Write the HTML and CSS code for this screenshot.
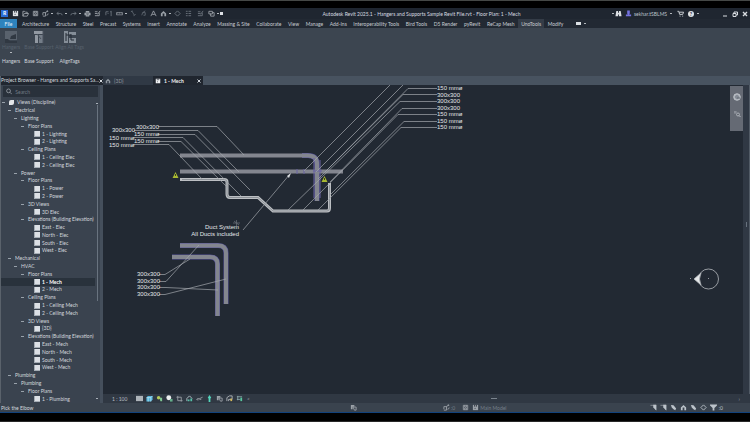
FILE: index.html
```html
<!DOCTYPE html>
<html lang="en">
<head>
<meta charset="utf-8">
<title>Autodesk Revit 2025.1</title>
<link rel="stylesheet" href="styles.css">
</head>
<body>
<svg class="defs" aria-hidden="true">
  <symbol id="home" viewBox="0 0 8 8"><path fill="currentColor" d="M1 1h6v6H1z"/><path stroke="#252c36" d="M3 1v2M5 1v2M3 5h1"/></symbol>
  <symbol id="open" viewBox="0 0 8 8"><path d="M1 7V1.500h2l1 1h2V4M1 7l1.500-3h5L6 7z" fill="none" stroke="currentColor"/></symbol>
  <symbol id="save" viewBox="0 0 8 8"><path d="M1.500 1.500h5v5h-5zM3 1.500v2h2v-2M3 6.500v-2h2v2" fill="none" stroke="currentColor"/></symbol>
  <symbol id="sync" viewBox="0 0 8 8"><path d="M1 6V3h3v4H1M4 3.500q0-2 3-2M7 1.500L5.500.5M7 4q0 2-2 2" fill="none" stroke="currentColor"/></symbol>
  <symbol id="undo" viewBox="0 0 8 8"><path d="M3 2L1 4l2 1.500M1 4h4q2 0 2 2" fill="none" stroke="currentColor"/></symbol>
  <symbol id="redo" viewBox="0 0 8 8"><path d="M5 2l2 2-2 1.500M7 4H3Q1 4 1 6" fill="none" stroke="currentColor"/></symbol>
  <symbol id="print" viewBox="0 0 8 8"><path d="M2 1h4v2h1.500v3H6v1.500H2V6H.5V3H2z" fill="currentColor"/><path d="M2.500 3.500h3M3 5.500h2" stroke="#252c36" stroke-width=".7"/></symbol>
  <symbol id="edit" viewBox="0 0 8 8"><path d="M1 2h3M1 4h3M1 6.500h5V3M4 5l3-4" fill="none" stroke="currentColor"/></symbol>
  <symbol id="section" viewBox="0 0 8 8"><path d="M1 2v4M1 2h3M3 4h1M7 1v6M6 2h1" fill="none" stroke="currentColor"/></symbol>
  <symbol id="measure" viewBox="0 0 8 8"><path d="M.5 3h7v2.500h-7zM2 3v1M4 3v1M6 3v1" fill="none" stroke="currentColor" stroke-width=".8"/></symbol>
  <symbol id="dim" viewBox="0 0 8 8"><path d="M2 1l3 5M1 2l2-1M4 6.500L6.500 5" fill="none" stroke="currentColor" stroke-width=".8"/></symbol>
  <symbol id="tag" viewBox="0 0 8 8"><path d="M2 6l1-3 3-2M3 3h3v3H4" fill="none" stroke="currentColor" stroke-width=".8"/></symbol>
  <symbol id="text" viewBox="0 0 8 8"><path d="M1 7l3-6 3 6M2.500 5h3" fill="none" stroke="currentColor"/></symbol>
  <symbol id="house" viewBox="0 0 8 8"><path d="M1 7V4l3-3 3 3v3H5V4H3v3z" fill="currentColor"/></symbol>
  <symbol id="ring" viewBox="0 0 8 8"><path d="M4 1l3 3-3 3-3-3z" fill="none" stroke="currentColor"/></symbol>
  <symbol id="lines" viewBox="0 0 8 8"><path d="M1 1.500h2M4 1.500h3M1 4h2M4 4h3M1 6.500h2M4 6.500h3" stroke="currentColor"/></symbol>
  <symbol id="windows" viewBox="0 0 8 8"><path d="M1 1.500h4v3H1zM3 4v3h4V3H5" fill="none" stroke="currentColor"/></symbol>
  <symbol id="binoc" viewBox="0 0 8 8"><path d="M1.500 1h2v2h1V1h2l1 6h-3V5h-1v2h-3z" fill="currentColor"/></symbol>
  <symbol id="user" viewBox="0 0 8 8"><path d="M2.500.5h3V4L4.700 5H7v2H1V5h2.300L2.500 4z" fill="#7472df"/></symbol>
  <symbol id="cart" viewBox="0 0 8 8"><path d="M.5 1.500H2L3 5h3.500l1-2.500h-5M3 7h1M6 7h1" fill="none" stroke="currentColor"/></symbol>
  <symbol id="search" viewBox="0 0 8 8"><circle cx="3.200" cy="3.200" r="2.400" fill="none" stroke="currentColor"/><path d="M5 5l2.500 2.500" stroke="currentColor"/></symbol>
  <symbol id="pick" viewBox="0 0 8 8"><path d="M.5 1.500h4M4 1h3v6L5.500 5.500 4 4z" fill="currentColor" stroke="currentColor" stroke-width=".6"/></symbol>
  <symbol id="pin" viewBox="0 0 8 8"><path d="M1 1l3 .5 3 3.500-1 2-2-1-2-2z" fill="currentColor"/></symbol>
  <symbol id="filter" viewBox="0 0 8 8"><path d="M0 .5h8v1.300L5 4.500v3H3v-3L0 1.800z" fill="currentColor"/></symbol>
  <symbol id="cube" viewBox="0 0 8 8"><path d="M2 1h5.500v4.500l-2 2H.5V3z" fill="#54b5dc"/><path d="M.5 3h5v4.500M5.500 3l2-2M2.500 3v4.500" stroke="#d3edf5" stroke-width=".7" fill="none"/></symbol>
  <symbol id="sun" viewBox="0 0 8 8"><circle cx="3" cy="3" r="2" fill="#b6c95a"/><path d="M4 3h3v4H5z" fill="#80c894"/></symbol>
  <symbol id="shadow" viewBox="0 0 8 8"><circle cx="3.200" cy="3.200" r="2.800" fill="#eceef0"/><path d="M4.500 4.500h3v3h-3z" fill="#65b08c"/></symbol>
  <symbol id="crop" viewBox="0 0 8 8"><path d="M2 1v5.500h5.500M.5 2.500h5.500v5" fill="none" stroke="currentColor"/></symbol>
  <symbol id="cropon" viewBox="0 0 8 8"><path d="M1 7V4l3-3 3 3" fill="none" stroke="#b9c9d0"/><path d="M2 5h2v2H2zM5 4h2v3H5z" fill="#55c2aa"/></symbol>
  <symbol id="glass" viewBox="0 0 8 8"><path d="M.5 5.500l2-2 1 1 2-1 2-1M1 5.500h2M4 5h2" fill="none" stroke="currentColor"/></symbol>
  <symbol id="bulb" viewBox="0 0 8 8"><path d="M4 0l2 3-1 1v4H3V4L2 3z" fill="#55d5bd"/></symbol>
  <symbol id="layers" viewBox="0 0 8 8"><path d="M1 1h4v2H3v3H1z" fill="currentColor"/><path d="M3.500 3.500H7V7H5z" fill="none" stroke="currentColor"/></symbol>
  <symbol id="analytic" viewBox="0 0 8 8"><path d="M1 7V3l3-2h3v4H3v2" fill="none" stroke="#b4b8bd"/><path d="M5 4h2v3H5z" fill="#d4b95c"/></symbol>
  <symbol id="reveal" viewBox="0 0 8 8"><path d="M1 2h6M2 1v5M1 5h4" fill="none" stroke="#8ca6a9"/><path d="M5 3h2v4H5z" fill="#58c9a0"/></symbol>
  <symbol id="wheel" viewBox="0 0 8 8"><circle cx="4" cy="4" r="3.300" fill="#a2a7b0" stroke="#cbd0d6" stroke-width=".8"/><circle cx="4" cy="4" r="1.300" fill="none" stroke="#606873" stroke-width=".7"/><path d="M4 5h3" stroke="#606873"/></symbol>
  <symbol id="zoomr" viewBox="0 0 8 8"><path d="M1 2h3M2 1v3" stroke="#a7abb2" stroke-width=".7"/><circle cx="5" cy="4.500" r="1.500" fill="none" stroke="#b8bcc3" stroke-width=".8"/><path d="M6 5.500L7.500 7" stroke="#b8bcc3"/></symbol>
</svg>

<div class="app">
  <header class="titlebar">
    <div class="quick">
      <button class="logo" aria-label="Revit">R</button>
      <button class="tool bright" aria-label="Home"><svg><use href="#home"/></svg></button>
      <button class="tool" aria-label="Open"><svg><use href="#open"/></svg></button>
      <button class="tool" aria-label="Save"><svg><use href="#save"/></svg></button>
      <button class="tool drop" aria-label="Synchronize"><svg><use href="#sync"/></svg></button>
      <button class="tool drop dim" aria-label="Undo"><svg><use href="#undo"/></svg></button>
      <button class="tool drop dim" aria-label="Redo"><svg><use href="#redo"/></svg></button>
      <button class="tool" aria-label="Print"><svg><use href="#print"/></svg></button>
      <button class="tool" aria-label="Edit"><svg><use href="#edit"/></svg></button>
      <button class="tool dim wide" aria-label="Section"><svg><use href="#section"/></svg></button>
      <button class="tool drop" aria-label="Measure"><svg><use href="#measure"/></svg></button>
      <button class="tool dim" aria-label="Dimension"><svg><use href="#dim"/></svg></button>
      <button class="tool dim" aria-label="Tag"><svg><use href="#tag"/></svg></button>
      <button class="tool" aria-label="Text"><svg><use href="#text"/></svg></button>
      <button class="tool drop" aria-label="3D view"><svg><use href="#house"/></svg></button>
      <button class="tool dim" aria-label="Section mark"><svg><use href="#ring"/></svg></button>
      <button class="tool dim wide" aria-label="Thin lines"><svg><use href="#lines"/></svg></button>
      <button class="tool dim wide" aria-label="Close inactive"><svg><use href="#edit"/></svg></button>
      <button class="tool drop" aria-label="Switch windows"><svg><use href="#windows"/></svg></button>
      <button class="caret bright" aria-label="Customize"></button>
    </div>
    <h1>Autodesk Revit 2025.1 - Hangers and Supports Sample Revit File.rvt - Floor Plan: 1 - Mech</h1>
    <div class="account">
      <i class="caret"></i>
      <button class="tool bright" aria-label="Find"><svg><use href="#binoc"/></svg></button>
      <button class="tool" aria-label="Account"><svg><use href="#user"/></svg></button>
      <button class="name drop">sekhar.tSBLMS</button>
      <button class="tool bright" aria-label="Store"><svg><use href="#cart"/></svg></button>
      <button class="help" aria-label="Help">?</button>
      <i class="caret"></i>
    </div>
    <div class="window">
      <button aria-label="Minimize"><svg viewBox="0 0 6 6"><path d="M1 5h4"/></svg></button>
      <button aria-label="Restore"><svg viewBox="0 0 6 6"><path d="M1 2.500h3v3H1zM2 2.500V1h3.500v3H4"/></svg></button>
      <button aria-label="Close"><svg viewBox="0 0 6 6"><path d="M1 1l4 4M5 1L1 5" stroke-width="1.400"/></svg></button>
    </div>
  </header>

  <nav class="menu">
    <button class="file">File</button>
    <div class="names"><button>Architecture</button><button>Structure</button><button>Steel</button><button>Precast</button><button>Systems</button><button>Insert</button><button>Annotate</button><button>Analyze</button><button>Massing &amp; Site</button><button>Collaborate</button><button>View</button><button>Manage</button><button>Add-Ins</button><button>Interoperability Tools</button><button>Bird Tools</button><button>D5 Render</button><button>pyRevit</button><button>ReCap Mesh</button><button class="on">UnoTools</button><button>Modify</button></div>
    <button class="state drop" aria-label="Ribbon display"><i></i></button>
  </nav>

  <section class="ribbon">
    <div class="panel">
      <button><svg viewBox="0 0 14 14"><path d="M1 1h12v9H1z" fill="#59626d"/><path d="M1 9h3l2 2h7v2H1zM7 6l5-2v5H6z" fill="#303842"/></svg><span>Hangers</span></button>
      <i class="caret"></i>
      <h2>Hangers</h2>
    </div>
    <div class="panel">
      <button><svg viewBox="0 0 14 14"><path d="M2 1h9v3H2zM3 5h3v8H3z" fill="#9299a2"/><path d="M7 5h4v8H7z" fill="#747d88"/><path d="M5 4l4 5M11 1v12" stroke="#4a535e"/></svg><span>Base Support</span></button>
      <h2>Base Support</h2>
    </div>
    <div class="panel tight">
      <button><svg viewBox="0 0 14 14"><path d="M1 1h4v12H1zM6 2h7v3H6zM6 8h7v5H6z" fill="#858e98"/><path d="M3 3v8M3 5h5M8 4v6h3" stroke="#252d37" fill="none"/></svg><span>Align All Tags</span></button>
      <h2>AlignTags</h2>
    </div>
  </section>

  <main class="work">
    <aside class="browser">
      <header><h2>Project Browser - Hangers and Supports Sa...</h2><button aria-label="Close browser"><svg viewBox="0 0 4 4"><path d="M.5.5l3 3M3.500.5l-3 3"/></svg></button></header>
      <label class="search"><svg><use href="#search"/></svg><input type="text" placeholder="Search" aria-label="Search"></label>
      <div class="treebox">
        <ul class="tree">
          <li class="l0"><b></b><em></em>Views (Discipline)</li>
          <li class="l1"><b></b>Electrical</li>
          <li class="l2"><b></b>Lighting</li>
          <li class="l3"><b></b>Floor Plans</li>
          <li class="l4"><i></i>1 - Lighting</li>
          <li class="l4"><i></i>2 - Lighting</li>
          <li class="l3"><b></b>Ceiling Plans</li>
          <li class="l4"><i></i>1 - Ceiling Elec</li>
          <li class="l4"><i></i>2 - Ceiling Elec</li>
          <li class="l2"><b></b>Power</li>
          <li class="l3"><b></b>Floor Plans</li>
          <li class="l4"><i></i>1 - Power</li>
          <li class="l4"><i></i>2 - Power</li>
          <li class="l3"><b></b>3D Views</li>
          <li class="l4"><i></i>3D Elec</li>
          <li class="l3"><b></b>Elevations (Building Elevation)</li>
          <li class="l4"><i></i>East - Elec</li>
          <li class="l4"><i></i>North - Elec</li>
          <li class="l4"><i></i>South - Elec</li>
          <li class="l4"><i></i>West - Elec</li>
          <li class="l1"><b></b>Mechanical</li>
          <li class="l2"><b></b>HVAC</li>
          <li class="l3"><b></b>Floor Plans</li>
          <li class="l4 current"><i></i>1 - Mech</li>
          <li class="l4"><i></i>2 - Mech</li>
          <li class="l3"><b></b>Ceiling Plans</li>
          <li class="l4"><i></i>1 - Ceiling Mech</li>
          <li class="l4"><i></i>2 - Ceiling Mech</li>
          <li class="l3"><b></b>3D Views</li>
          <li class="l4"><i></i>{3D}</li>
          <li class="l3"><b></b>Elevations (Building Elevation)</li>
          <li class="l4"><i></i>East - Mech</li>
          <li class="l4"><i></i>North - Mech</li>
          <li class="l4"><i></i>South - Mech</li>
          <li class="l4"><i></i>West - Mech</li>
          <li class="l1"><b></b>Plumbing</li>
          <li class="l2"><b></b>Plumbing</li>
          <li class="l3"><b></b>Floor Plans</li>
          <li class="l4"><i></i>1 - Plumbing</li>
        </ul>
        <div class="scroll"><svg viewBox="0 0 4 4"><path d="M1 3l1-1 1 1"/></svg><i></i><svg viewBox="0 0 4 4"><path d="M1 1l1 1 1-1"/></svg></div>
      </div>
    </aside>

    <section class="document">
      <div class="tabs">
        <button><svg><use href="#house"/></svg>{3D}</button>
        <button class="on"><svg><use href="#home"/></svg>1 - Mech<svg class="close" viewBox="0 0 4 4"><path d="M.5.5l3 3M3.500.5l-3 3"/></svg></button>
      </div>
      <div class="view">
        <div class="canvas">
          <svg class="drawing" viewBox="103 85 640 309" preserveAspectRatio="xMinYMin slice" role="img" aria-label="Mechanical floor plan">
            <g class="edge"><path d="M302 155.500H308Q317 155.500 317 164V201"/><path d="M180 245.500H218Q226 245.500 226 253V304"/><path d="M172 257H210Q217.500 257 217.500 264V316"/></g>
            <g class="duct"><path d="M180 155.500H308Q317 155.500 317 164V201"/><path d="M180 171.500H343"/><path d="M180 245.500H218Q226 245.500 226 253V304"/><path d="M172 257H210Q217.500 257 217.500 264V316"/></g>
            <path class="seam" d="M297 169v5M304 169v5M314 158v40M320 160v38M313 171h9"/>
            <path class="pipe" d="M180 179.500H224Q227 179.500 227 182V194Q227 197.500 230 197.500H258L273 211H327Q329.500 211 329.500 208V183"/>
            <path class="core" d="M182 179.500H224Q227 179.500 227 182V194Q227 197.500 230 197.500H258L273 211H327Q329.500 211 329.500 208V185"/>
            <g class="leader">
              <path d="M158 126.500H217L244 155M134 130.500H198L239 172M158 134.500H195L250 190M134 137.500H183L241 196M158 141.500H181L228 188M134 144.500H169L202 179"/>
              <path d="M390 85L304 171M403 85L316 172M437 88.500H408L325 172M437 94.500H403L318 179M437 101.500H400L287 211M437 108.500H402L330 182M437 114.500H398L302 211M437 121.500H404L330 195M437 127.500H401L317 211"/>
              <path d="M243 230L290 174M159 274.500H165L190 259M159 281.500H166L199 245M159 287.500H166L218 290M159 294.500H165L226 279"/>
            </g>
            <path class="head" d="M291 173l-2 5-2-2z"/>
            <g class="label">
              <text x="136" y="129">300x300</text><text x="112" y="132">300x300</text><text x="134" y="136">150 mmø</text><text x="109" y="140">150 mmø</text><text x="134" y="143">150 mmø</text><text x="109" y="147">150 mmø</text>
              <text x="437" y="90">150 mmø</text><text x="437" y="97">300x300</text><text x="437" y="103">300x300</text><text x="437" y="110">300x300</text><text x="437" y="116">150 mmø</text><text x="437" y="123">150 mmø</text><text x="437" y="129">150 mmø</text>
              <text x="137" y="276">300x300</text><text x="137" y="283">300x300</text><text x="137" y="289">300x300</text><text x="137" y="296">300x300</text>
              <text x="239" y="229" text-anchor="end">Duct System</text><text x="239" y="236" text-anchor="end">All Ducts included</text>
            </g>
            <g class="warn"><path d="M175.500 172l3 6h-6zM324.500 176l3 6h-6z"/><path class="mark" d="M175.500 174v2M324.500 178v2"/></g>
            <path class="cursor" d="M233 223h7M236.500 220v6M234 221l5 4"/>
            <g class="compass"><circle cx="708.500" cy="279" r="10"/><path d="M694 279l7-6q-3 6 0 12z"/><path d="M690 278.500h1M708 278.500h1"/></g>
          </svg>
          <div class="navbar"><button aria-label="Steering wheel"><svg><use href="#wheel"/></svg></button><button aria-label="Zoom"><svg><use href="#zoomr"/></svg></button></div>
        </div>
        <div class="vscroll"><i></i></div>
      </div>
      <footer class="viewbar">
        <button class="scale">1 : 100</button>
        <button class="tool" aria-label="Detail level"><svg viewBox="0 0 8 8"><path d="M0 1h8v6H0z" fill="#aeb4ba"/></svg></button>
        <button class="tool" aria-label="Visual style"><svg><use href="#cube"/></svg></button>
        <button class="tool" aria-label="Sun path"><svg><use href="#sun"/></svg></button>
        <button class="tool" aria-label="Shadows"><svg><use href="#shadow"/></svg></button>
        <button class="tool" aria-label="Crop view"><svg><use href="#crop"/></svg></button>
        <button class="tool" aria-label="Show crop"><svg><use href="#cropon"/></svg></button>
        <button class="tool" aria-label="Hide or isolate"><svg><use href="#glass"/></svg></button>
        <button class="tool" aria-label="Reveal hidden"><svg><use href="#bulb"/></svg></button>
        <button class="tool" aria-label="View properties"><svg><use href="#layers"/></svg></button>
        <button class="tool" aria-label="Analytical model"><svg><use href="#analytic"/></svg></button>
        <button class="tool" aria-label="Constraints"><svg><use href="#reveal"/></svg></button>
        <span class="angle">&lt;</span>
        <div class="hscroll"><i></i></div>
        <span class="angle">›</span>
      </footer>
    </section>
  </main>

  <footer class="status">
    <p>Pick the Elbow</p>
    <div class="group"><button class="tool" aria-label="Worksharing"><svg><use href="#layers"/></svg></button></div>
    <div class="group sets"><button class="tool" aria-label="Editing requests"><svg><use href="#sync"/></svg></button><span>:0</span><button class="tool" aria-label="Worksets"><svg><use href="#save"/></svg></button><button class="tool" aria-label="Design options"><svg><use href="#home"/></svg></button><span>Main Model</span></div>
    <div class="group picks">
      <button class="tool" aria-label="Select links"><svg><use href="#pick"/></svg></button><button class="tool" aria-label="Select underlay"><svg><use href="#pick"/></svg></button><button class="tool" aria-label="Select pinned"><svg><use href="#pin"/></svg></button><button class="tool" aria-label="Select by face"><svg><use href="#house"/></svg></button><button class="tool" aria-label="Drag elements"><svg><use href="#pin"/></svg></button><button class="tool" aria-label="Background processes"><svg><use href="#ring"/></svg></button><button class="tool" aria-label="Filter"><svg><use href="#filter"/></svg></button><span>:0</span>
    </div>
  </footer>
</div>
</body>
</html>
```
FILE: styles.css
```css
* { box-sizing: border-box; margin: 0; padding: 0; }
body { background: #000; color: #d3d8de; font: 5px/8px Lato, "Liberation Sans", sans-serif; }
button, input { font: inherit; color: inherit; background: none; border: 0; white-space: nowrap; }
h1, h2 { font: inherit; white-space: nowrap; }
ul { list-style: none; }
svg { display: block; }
.defs { position: absolute; width: 0; height: 0; }

.app { display: flex; flex-direction: column; height: 100vh; padding-bottom: 8px; border-top: 1px solid #454846; border-bottom: 1px solid #292929; }

.tool { display: flex; align-items: center; justify-content: center; width: 10px; height: 9px; flex: none; color: #9ba1a8; }
.tool svg { width: 7px; height: 7px; flex: none; }
.tool.dim { color: #6d757e; }
.tool.bright { color: #dce0e4; }
.tool.wide { width: 12px; }
.drop::after, .caret { content: ""; flex: none; width: 2px; height: 1px; background: #b3b8bd; }
.tool.drop { width: 14px; gap: 2px; }
.caret.bright { width: 3px; height: 3px; background: #dce0e4; }

.titlebar { display: flex; align-items: center; height: 11px; margin-top: 7px; flex: none; background: #1f2630; }
.quick { display: flex; align-items: center; flex: 0 0 43%; }
.logo { width: 7px; height: 7px; margin: 0 2px 0 1px; background: #286bd5; color: #fff; font-weight: 700; line-height: 7px; }
.titlebar h1 { color: #d8dce0; }
.account { display: flex; align-items: center; margin-left: auto; }
.account .name { display: flex; align-items: center; gap: 3px; padding-right: 3px; color: #bdc3ca; }
.help { width: 6px; height: 6px; margin: 0 3px; border-radius: 50%; background: #dfe3e6; color: #1f2630; font-weight: 700; line-height: 6px; }
.window { display: flex; align-items: center; gap: 4px; padding: 0 2px 0 23px; }
.window svg { width: 6px; height: 6px; fill: none; stroke: #d8dce0; stroke-width: 1px; }

.menu { display: flex; height: 9px; flex: none; background: #222933; }
.names { display: flex; justify-content: space-between; flex: 0 0 73%; }
.menu button { padding: 0 3px; color: #c8cdd3; }
.menu .file { width: 17px; margin-right: 2px; background: #2e83bd; color: #e9f3fb; }
.menu .on { background: #343c47; }
.menu .state { display: flex; align-items: center; gap: 3px; margin-left: 6px; }
.state i { width: 5px; height: 3px; background: #dce0e4; }

.ribbon { display: flex; gap: 4px; height: 48px; flex: none; padding: 2px 2px 0; background: #3c4550; }
.panel { display: grid; grid-template-rows: 22px 4px 10px; justify-items: center; align-content: start; }
.panel button { display: flex; flex-direction: column; align-items: center; color: #57616d; line-height: 6px; }
.panel svg { width: 14px; height: 14px; }
.panel h2 { grid-row: 3; line-height: 11px; color: #d3d8de; }
.panel.tight { margin-left: 2px; }
.panel.tight button { margin: 0 -8px; }

.work { display: flex; flex: 1; min-height: 0; }
.browser { display: flex; flex-direction: column; width: 103px; flex: none; border-left: 1px solid #5a626b; border-right: 3px solid #454f5c; background: #3a434f; }
.browser header { display: flex; align-items: center; justify-content: space-between; height: 9px; margin-right: -3px; padding-right: 1px; flex: none; background: #20262f; line-height: 9px; }
.browser header svg, .tabs .close { width: 4px; height: 4px; fill: none; stroke: #d3d8de; stroke-width: 1px; }
.search { display: flex; align-items: center; gap: 3px; height: 11px; margin: 1px 2px 2px; padding-left: 3px; flex: none; background: #29313b; }
.search svg { width: 7px; height: 7px; color: #9fa6ae; }
.search input { width: 100%; min-width: 0; outline: 0; }
.search input::placeholder { color: #737c86; opacity: 1; }
.treebox { display: flex; flex: 1; min-height: 0; }
.tree { display: grid; grid-auto-rows: 1fr; flex: 1; min-width: 0; }
.tree li { display: flex; align-items: center; min-height: 0; line-height: 7px; white-space: nowrap; }
.tree b { width: 3px; height: 1px; margin-right: 4px; background: #98a1aa; }
.tree i { width: 6px; height: 6px; margin-right: 2px; border: 1px solid #a5adb5; border-width: 0 0 1px 1px; background: #dce0e5; }
.tree em { width: 5px; height: 5px; margin-right: 3px; border-radius: 2px 0; background: #e3e6e9; }
.l0 { padding-left: 1px; }
.l1 { padding-left: 7px; }
.l2 { padding-left: 13px; }
.l3 { padding-left: 20px; }
.l4 { padding-left: 33px; }
.tree .current { background: #29323c; color: #fff; font-weight: 700; }
.scroll { display: flex; flex-direction: column; align-items: center; width: 4px; margin-right: 1px; padding: 2px 0; }
.scroll svg { width: 4px; height: 4px; fill: none; stroke: #a9b0b8; }
.scroll i { width: 1px; flex: 0 1 196px; margin-bottom: auto; background: #69737f; }

.document { display: flex; flex-direction: column; flex: 1; min-width: 0; }
.tabs { display: flex; height: 9px; flex: none; background: #485360; }
.tabs button { display: flex; align-items: center; gap: 3px; width: 50px; padding: 0 2px; background: #303945; color: #8d959e; }
.tabs svg { width: 6px; height: 6px; }
.tabs .on { background: #20262f; color: #f0f2f4; font-weight: 700; }
.tabs .close { margin-left: auto; }
.view { display: flex; flex: 1; min-height: 0; }
.canvas { position: relative; flex: 1; min-width: 0; background: #222933; overflow: hidden; }
.drawing { width: 100%; height: 100%; fill: none; }
.edge path { stroke: #56549a; stroke-width: 5px; }
.duct path { stroke: #83868f; stroke-width: 4px; }
.seam { stroke: #6862a3; stroke-width: 1px; }
.pipe { stroke: #bcbfc3; stroke-width: 3px; }
.core { stroke: #8d9298; stroke-width: 1px; }
.leader { stroke: #a3a8ae; stroke-width: .7px; }
.head { fill: #d8dbde; }
.label { fill: #e3e6e8; font: 6px "Liberation Sans", sans-serif; }
.warn { fill: #a9b932; }
.mark { stroke: #39421d; }
.cursor { stroke: #646b73; stroke-width: .8px; }
.compass { stroke: #b4b8bd; stroke-width: .8px; }
.compass path { fill: #e3e6e8; }
.navbar { position: absolute; top: 1px; right: 0; display: flex; flex-direction: column; align-items: center; gap: 9px; width: 13px; height: 45px; padding-top: 7px; background: #656a74; }
.navbar svg { width: 8px; height: 8px; }
.vscroll { display: flex; align-items: center; justify-content: center; width: 7px; border-right: 1px solid #525b66; background: #303844; }
.vscroll i { width: 1px; height: 5px; margin-bottom: 30px; background: #67717d; }
.viewbar { display: flex; align-items: center; height: 9px; flex: none; padding: 0 7px 0 9px; background: #303843; }
.scale { width: 22px; text-align: left; color: #b6bdc4; }
.angle { color: #9aa2aa; padding: 0 3px; }
.hscroll { flex: 1; display: flex; justify-content: center; }
.hscroll i { width: 6px; height: 1px; background: #7b848e; }

.status { display: grid; grid-template-columns: 348px 93px 1fr auto; align-items: center; height: 10px; flex: none; border-bottom: 1px solid #12427c; background: #3a434e; }
.status p { padding-left: 1px; }
.group { display: flex; align-items: center; }
.sets span { color: #747e89; padding-right: 5px; }
.picks { padding-right: 27px; }
.picks .tool { color: #bcc3ca; }
.picks span { color: #bcc3ca; }
```
